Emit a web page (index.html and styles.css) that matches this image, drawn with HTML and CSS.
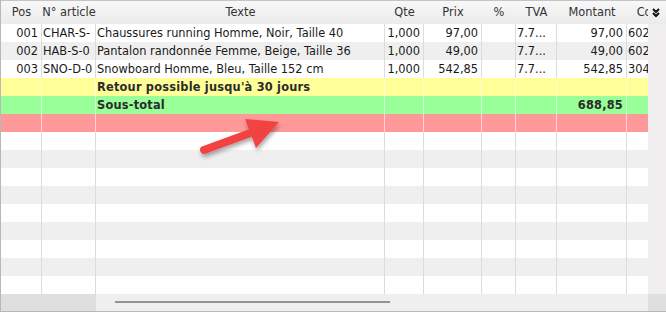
FILE: index.html
```html
<!DOCTYPE html>
<html lang="fr">
<head>
<meta charset="utf-8">
<title>Lignes</title>
<link rel="stylesheet" href="styles.css">
</head>
<body>
<div class="grid">
  <div class="head">
    <div class="cols hcols">
      <div class="hc">Pos</div>
      <div class="hc">N° article</div>
      <div class="hc">Texte</div>
      <div class="hc">Qte</div>
      <div class="hc">Prix</div>
      <div class="hc">%</div>
      <div class="hc">TVA</div>
      <div class="hc">Montant</div>
      <div class="hc">Compte</div>
    </div>
    <div class="hicon">
      <svg width="8" height="10" viewBox="0 0 8 10"><path d="M1 1 L4 4 L7 1 M1 5 L4 8 L7 5" fill="none" stroke="#111" stroke-width="2"/></svg>
    </div>
  </div>
  <div class="middle">
    <div class="body">
      <div class="cols row">
        <div class="c r">001</div><div class="c">CHAR-S-</div><div class="c">Chaussures running Homme, Noir, Taille 40</div><div class="c r">1,000</div><div class="c r">97,00</div><div class="c"></div><div class="c">7.7...</div><div class="c r">97,00</div><div class="c">602</div>
      </div>
      <div class="cols row alt">
        <div class="c r">002</div><div class="c">HAB-S-0</div><div class="c">Pantalon randonnée Femme, Beige, Taille 36</div><div class="c r">1,000</div><div class="c r">49,00</div><div class="c"></div><div class="c">7.7...</div><div class="c r">49,00</div><div class="c">602</div>
      </div>
      <div class="cols row">
        <div class="c r">003</div><div class="c">SNO-D-0</div><div class="c">Snowboard Homme, Bleu, Taille 152 cm</div><div class="c r">1,000</div><div class="c r">542,85</div><div class="c"></div><div class="c">7.7...</div><div class="c r">542,85</div><div class="c">304</div>
      </div>
      <div class="cols row yellow">
        <div class="c"></div><div class="c"></div><div class="c b">Retour possible jusqu'à 30 jours</div><div class="c"></div><div class="c"></div><div class="c"></div><div class="c"></div><div class="c"></div><div class="c"></div>
      </div>
      <div class="cols row green">
        <div class="c"></div><div class="c"></div><div class="c b">Sous-total</div><div class="c"></div><div class="c"></div><div class="c"></div><div class="c"></div><div class="c r b">688,85</div><div class="c"></div>
      </div>
      <div class="cols row red">
        <div class="c"></div><div class="c"></div><div class="c"></div><div class="c"></div><div class="c"></div><div class="c"></div><div class="c"></div><div class="c"></div><div class="c"></div>
      </div>
      <div class="cols row"><div class="c"></div><div class="c"></div><div class="c"></div><div class="c"></div><div class="c"></div><div class="c"></div><div class="c"></div><div class="c"></div><div class="c"></div></div>
      <div class="cols row alt"><div class="c"></div><div class="c"></div><div class="c"></div><div class="c"></div><div class="c"></div><div class="c"></div><div class="c"></div><div class="c"></div><div class="c"></div></div>
      <div class="cols row"><div class="c"></div><div class="c"></div><div class="c"></div><div class="c"></div><div class="c"></div><div class="c"></div><div class="c"></div><div class="c"></div><div class="c"></div></div>
      <div class="cols row alt"><div class="c"></div><div class="c"></div><div class="c"></div><div class="c"></div><div class="c"></div><div class="c"></div><div class="c"></div><div class="c"></div><div class="c"></div></div>
      <div class="cols row"><div class="c"></div><div class="c"></div><div class="c"></div><div class="c"></div><div class="c"></div><div class="c"></div><div class="c"></div><div class="c"></div><div class="c"></div></div>
      <div class="cols row alt"><div class="c"></div><div class="c"></div><div class="c"></div><div class="c"></div><div class="c"></div><div class="c"></div><div class="c"></div><div class="c"></div><div class="c"></div></div>
      <div class="cols row"><div class="c"></div><div class="c"></div><div class="c"></div><div class="c"></div><div class="c"></div><div class="c"></div><div class="c"></div><div class="c"></div><div class="c"></div></div>
      <div class="cols row alt"><div class="c"></div><div class="c"></div><div class="c"></div><div class="c"></div><div class="c"></div><div class="c"></div><div class="c"></div><div class="c"></div><div class="c"></div></div>
      <div class="cols row"><div class="c"></div><div class="c"></div><div class="c"></div><div class="c"></div><div class="c"></div><div class="c"></div><div class="c"></div><div class="c"></div><div class="c"></div></div>
    </div>
    <div class="vscroll"></div>
  </div>
  <div class="hscroll">
    <div class="frozen"></div>
    <div class="track"><div class="thumb"></div></div>
    <div class="corner"></div>
  </div>
  <svg class="arrow" width="666" height="312" viewBox="0 0 666 312">
    <defs>
      <filter id="sh" x="-20%" y="-40%" width="140%" height="180%">
        <feDropShadow dx="1" dy="3" stdDeviation="2" flood-color="#000" flood-opacity="0.35"/>
      </filter>
    </defs>
    <g filter="url(#sh)" fill="#f24343">
      <line x1="204" y1="150" x2="256" y2="131" stroke="#f24343" stroke-width="8" stroke-linecap="round"/>
      <polygon points="245,119 279,122 256,148"/>
    </g>
  </svg>
</div>
</body>
</html>
```

FILE: styles.css
```css
html, body {
  margin: 0;
  padding: 0;
  background: #fff;
}

.grid {
  position: relative;
  width: 666px;
  height: 312px;
  box-sizing: border-box;
  border-top: 1px solid #c4c4c4;
  border-left: 1px solid #b8b8b8;
  border-bottom: 1px solid #b8b8b8;
  display: flex;
  flex-direction: column;
  font-family: "DejaVu Sans", Verdana, sans-serif;
  font-size: 11.4px;
  color: #1a1a1a;
  overflow: hidden;
}

.cols {
  display: grid;
  grid-template-columns: 41px 54px 289px 39px 58px 34px 41px 70px 64px;
}

.head {
  display: flex;
  height: 23px;
  flex: none;
  background: linear-gradient(#f8f8f8, #ebebeb);
}

.hcols {
  width: 647px;
  overflow: hidden;
}

.hc {
  text-align: center;
  line-height: 23px;
  white-space: nowrap;
  color: #333;
}

.hicon {
  width: 18px;
  display: flex;
  align-items: center;
  justify-content: center;
  padding-right: 2px;
  box-sizing: border-box;
}

.middle {
  display: flex;
  height: 270px;
  flex: none;
}

.body {
  width: 647px;
  overflow: hidden;
}

.row {
  height: 18px;
  background: #fff;
}

.row.alt { background: #efefef; }
.row.yellow { background: #ffff99; }
.row.green { background: #99ff99; }
.row.red { background: #ff9999; }

.c {
  box-sizing: border-box;
  border-right: 1px solid #dcdcdc;
  padding: 0 3px 0 1px;
  line-height: 18px;
  white-space: nowrap;
  overflow: hidden;
}

.row.yellow .c,
.row.green .c,
.row.red .c {
  border-right-color: rgba(255, 255, 255, 0.6);
}

.c.r { text-align: right; }
.c.b { font-weight: bold; color: #2b2b2b; letter-spacing: 0.2px; }

.vscroll {
  width: 18px;
  background: #f0eeee;
}

.hscroll {
  display: flex;
  height: 17px;
  flex: none;
}

.frozen {
  width: 95px;
  background: #dfdfdf;
}

.track {
  width: 552px;
  background: #f0eeee;
  padding: 7px 0 0 19px;
  box-sizing: border-box;
}

.thumb {
  width: 275px;
  height: 2px;
  background: #949494;
}

.corner {
  width: 18px;
  background: #dfdfdf;
}

.arrow {
  position: absolute;
  left: -1px;
  top: -1px;
  pointer-events: none;
}
```
